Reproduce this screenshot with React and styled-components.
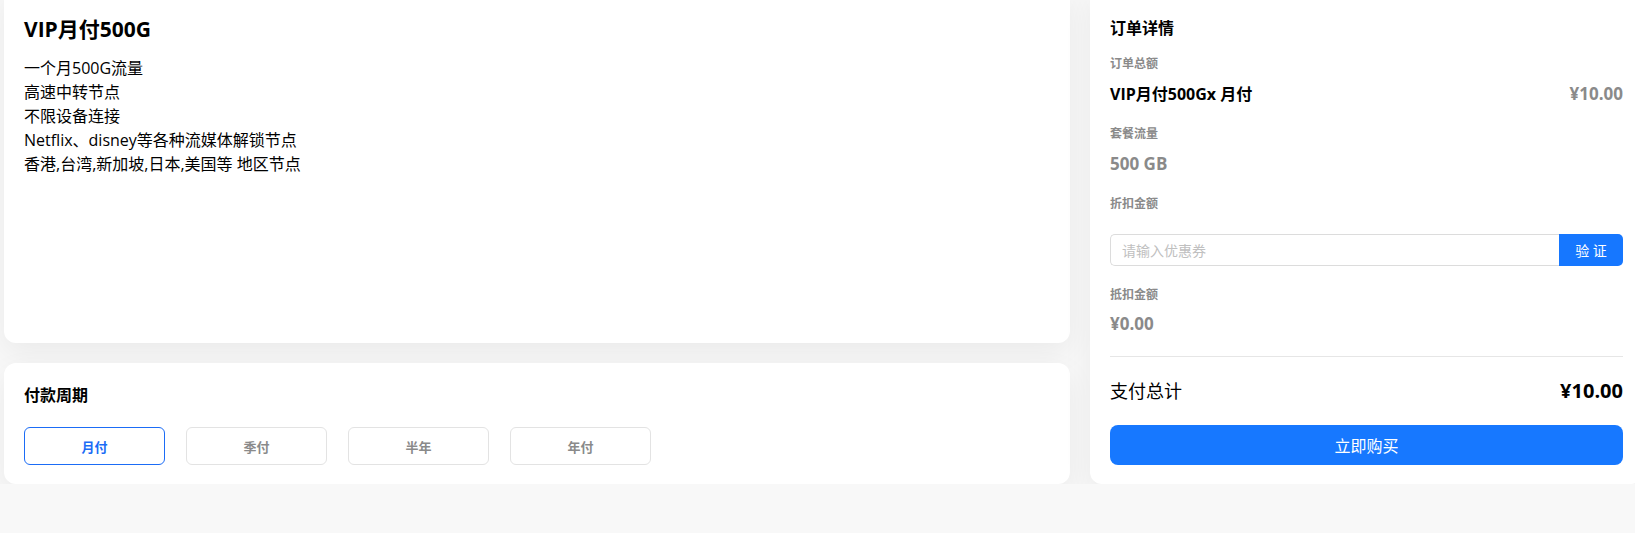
import React, { useState } from "react";
import styled, { createGlobalStyle } from "styled-components";

const GlobalStyle = createGlobalStyle`
  html, body {
    margin: 0;
    padding: 0;
    background: #f8f8f8;
    overflow: hidden;
  }
  body {
    font-family: "Open Sans", "Noto Sans CJK SC", sans-serif;
    color: #000;
  }
  * { box-sizing: border-box; }
`;

const Page = styled.div`
  display: flex;
  gap: 20px;
  margin: -12px 0 0 4px;
  width: 1639px;
  align-items: stretch;
`;

const LeftColumn = styled.div`
  width: 1066px;
  display: flex;
  flex-direction: column;
  gap: 20px;
`;

const Card = styled.section`
  background: #fff;
  border-radius: 12px;
  box-shadow: 0 10px 30px rgba(0, 0, 0, 0.06);
  padding: ${(p) => p.$pad || "20px"};
  flex: ${(p) => (p.$grow ? 1 : "none")};
`;

const PlanTitle = styled.h1`
  margin: 0 0 13px;
  font-size: 21px;
  line-height: 28px;
  font-weight: 700;
`;

const FeatureLine = styled.div`
  font-size: 16px;
  line-height: 24px;
`;

const SectionTitle = styled.h2`
  margin: 0;
  font-size: 16px;
  line-height: 24px;
  font-weight: 700;
`;

const PeriodRow = styled.div`
  display: flex;
  gap: 21px;
  margin-top: 20px;
`;

const PeriodButton = styled.button`
  width: 141px;
  height: 38px;
  border-radius: 6px;
  background: #fff;
  border: 1px solid ${(p) => (p.$active ? "#1b6cf6" : "#e3e3e3")};
  color: ${(p) => (p.$active ? "#1b6cf6" : "#8a8a8a")};
  font-family: inherit;
  font-size: 13px;
  font-weight: 700;
  cursor: pointer;
`;

const RightCard = styled(Card)`
  width: 553px;
  display: flex;
  flex-direction: column;
`;

const Label = styled.div`
  font-size: 12px;
  line-height: 20px;
  font-weight: 700;
  color: #8a8a8a;
  margin-top: ${(p) => p.$mt || "18px"};
`;

const ValueRow = styled.div`
  display: flex;
  justify-content: space-between;
  align-items: center;
  margin-top: ${(p) => p.$mt || "8px"};
  font-size: ${(p) => (p.$muted ? "17px" : "16px")};
  line-height: 24px;
  font-weight: 700;
  color: ${(p) => (p.$muted ? "#8a8a8a" : "#000")};
`;

const Muted = styled.span`
  color: #8a8a8a;
  font-size: 17px;
`;

const CouponRow = styled.div`
  display: flex;
  height: 32px;
  margin-top: 20px;
`;

const CouponInput = styled.input`
  flex: 1;
  min-width: 0;
  border: 1px solid #dcdcdc;
  border-right: none;
  border-radius: 5px 0 0 5px;
  padding: 0 11px;
  font-family: inherit;
  font-size: 14px;
  outline: none;
  &::placeholder {
    color: #c0c0c0;
  }
`;

const VerifyButton = styled.button`
  width: 64px;
  border: none;
  border-radius: 0 5px 5px 0;
  background: #1677ff;
  color: #fff;
  font-family: inherit;
  font-size: 14px;
  cursor: pointer;
`;

const Divider = styled.hr`
  border: none;
  border-top: 1px solid #e6e6e6;
  margin: 20px 0 0;
`;

const TotalRow = styled.div`
  display: flex;
  justify-content: space-between;
  align-items: center;
  margin-top: 19px;
  height: 28px;
`;

const TotalLabel = styled.span`
  font-size: 18px;
  font-weight: 400;
`;

const TotalValue = styled.span`
  font-size: 20px;
  font-weight: 700;
`;

const BuyButton = styled.button`
  margin-top: 21px;
  height: 40px;
  border: none;
  border-radius: 8px;
  background: #1778ff;
  color: #fff;
  font-family: inherit;
  font-size: 16px;
  cursor: pointer;
`;

const features = [
  "一个月500G流量",
  "高速中转节点",
  "不限设备连接",
  "Netflix、disney等各种流媒体解锁节点",
  "香港,台湾,新加坡,日本,美国等 地区节点",
];

const periods = ["月付", "季付", "半年", "年付"];

export default function App() {
  const [active, setActive] = useState(0);
  return (
    <>
      <GlobalStyle />
      <Page>
        <LeftColumn>
          <Card $grow $pad="27px 20px 20px">
            <PlanTitle>VIP月付500G</PlanTitle>
            {features.map((f) => (
              <FeatureLine key={f}>{f}</FeatureLine>
            ))}
          </Card>
          <Card $pad="20px 20px 19px">
            <SectionTitle>付款周期</SectionTitle>
            <PeriodRow>
              {periods.map((p, i) => (
                <PeriodButton key={p} $active={i === active} onClick={() => setActive(i)}>
                  {p}
                </PeriodButton>
              ))}
            </PeriodRow>
          </Card>
        </LeftColumn>
        <RightCard $pad="28px 20px 19px">
          <SectionTitle>订单详情</SectionTitle>
          <Label $mt="14px">订单总额</Label>
          <ValueRow>
            <span>VIP月付500Gx 月付</span>
            <Muted>¥10.00</Muted>
          </ValueRow>
          <Label>套餐流量</Label>
          <ValueRow $muted>500 GB</ValueRow>
          <Label>折扣金额</Label>
          <CouponRow>
            <CouponInput placeholder="请输入优惠券" />
            <VerifyButton>验 证</VerifyButton>
          </CouponRow>
          <Label $mt="19px">抵扣金额</Label>
          <ValueRow $muted $mt="7px">¥0.00</ValueRow>
          <Divider />
          <TotalRow>
            <TotalLabel>支付总计</TotalLabel>
            <TotalValue>¥10.00</TotalValue>
          </TotalRow>
          <BuyButton>立即购买</BuyButton>
        </RightCard>
      </Page>
    </>
  );
}
